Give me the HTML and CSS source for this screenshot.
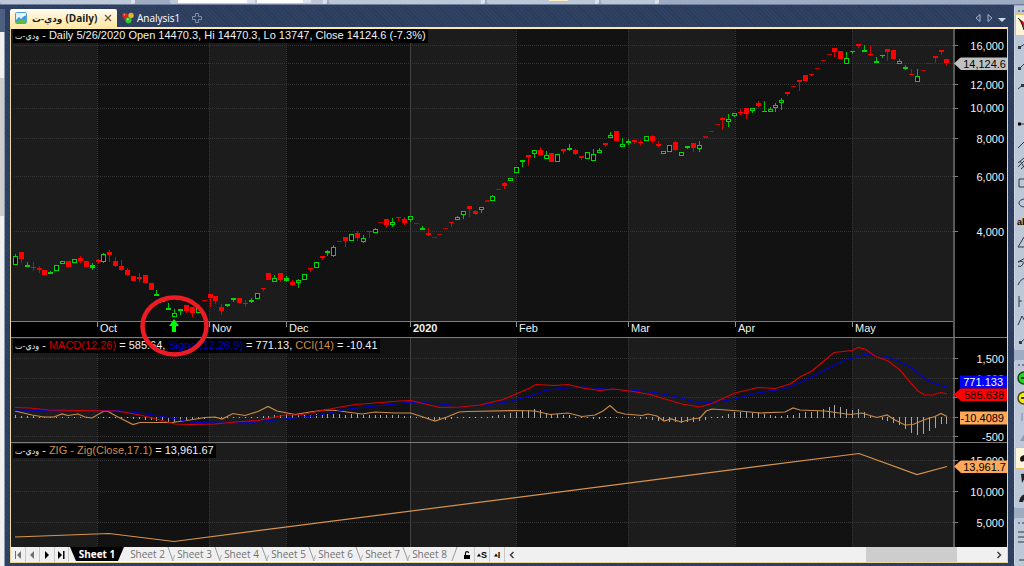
FILE: index.html
```html
<!DOCTYPE html>
<html lang="en">
<head>
<meta charset="utf-8">
<title>ودي-ت (Daily)</title>
<link rel="stylesheet" href="styles.css">
</head>
<body>
<div class="app">
  <header class="toolstrip">
    <div class="strip strip-a"></div>
    <div class="strip strip-b"><span class="field"></span><span class="field field-small"></span></div>
    <div class="strip strip-c"></div>
    <div class="strip strip-d"><span class="pressed"></span></div>
    <div class="strip strip-e"></div>
  </header>
  <div class="body">
    <aside class="side"><div class="side-head"></div><div class="side-track"><div class="side-thumb"></div></div></aside>
    <main class="workspace">
      <nav class="tabs">
        <button class="tab tab-active">
          <svg class="icon12" viewBox="0 0 12 12"><rect x=".5" y=".5" width="11" height="11" rx="1" fill="#dff0fb" stroke="#4f9fd4"/><path d="M1 8l3-3 2 2 4-4 1 1v7H1z" fill="#3c9be0"/><path d="M1 10q5-4 10-2v3H1z" fill="#5fb84a"/><circle cx="8.500" cy="3" r="1.300" fill="#fff"/></svg>
          <span class="tab-sym" dir="rtl">ودي-ت</span><span>(Daily)</span>
          <svg class="icon8" viewBox="0 0 8 8"><path d="M1 1l6 6M7 1L1 7" stroke="#66583a" stroke-width="1.300"/></svg>
        </button>
        <button class="tab">
          <svg class="icon12" viewBox="0 0 12 12"><circle cx="3" cy="3.500" r="2.700" fill="#e8201c"/><circle cx="9" cy="3.500" r="2.700" fill="#f0b020"/><path d="M1 5l5 1 1 5z" fill="#e8201c"/><circle cx="6.500" cy="8.300" r="3.100" fill="#35c02c"/><circle cx="2.400" cy="2.700" r=".8" fill="#ff9d90"/><circle cx="5.800" cy="7.300" r=".9" fill="#b0ff9a"/></svg>
          <span>Analysis1</span>
        </button>
        <button class="tab tab-new" aria-label="New tab">
          <svg class="icon12" viewBox="0 0 12 12"><path d="M4.500 1.500h3v3h3v3h-3v3h-3v-3h-3v-3h3z" fill="none" stroke="#7f8da6"/></svg>
        </button>
        <div class="tab-nav">
          <button aria-label="Previous"><svg class="icon8" viewBox="0 0 8 8"><path d="M6 .5v7L2 4z" fill="none" stroke="#aab6c9"/></svg></button>
          <button aria-label="Next"><svg class="icon8" viewBox="0 0 8 8"><path d="M2 .5v7L6 4z" fill="none" stroke="#aab6c9"/></svg></button>
          <button aria-label="List"><svg class="icon8" viewBox="0 0 8 8"><path d="M0 4h8L4 8z" fill="#ccd5e3"/></svg></button>
        </div>
      </nav>
      <section class="frame">
        <div class="charts">
          <div class="plot"><svg id="price" viewBox="11 29 942 292" preserveAspectRatio="none"></svg>
            <p class="legend"><bdi class="sym">ودي-ت</bdi> - Daily 5/26/2020 Open 14470.3, Hi 14470.3, Lo 13747, Close 14124.6 (-7.3%)</p></div>
          <div class="axis" id="price-axis"></div>
          <div class="timeline" id="timeline"></div>
          <div class="axis"></div>
          <div class="plot split"><svg id="macd" viewBox="11 338 942 104" preserveAspectRatio="none"></svg>
            <p class="legend"><bdi class="sym">ودي-ت</bdi> - <span class="c-red">MACD(12,26)</span> = 585.64, <span class="c-blue">Signal(12,26,9)</span> = 771.13, <span class="c-orange">CCI(14)</span> = -10.41</p></div>
          <div class="axis split" id="macd-axis"></div>
          <div class="plot split"><svg id="zig" viewBox="11 443 942 104" preserveAspectRatio="none"></svg>
            <p class="legend"><bdi class="sym">ودي-ت</bdi> - <span class="c-orange">ZIG - Zig(Close,17.1)</span> = 13,961.67</p></div>
          <div class="axis split" id="zig-axis"></div>
          <svg class="marks" viewBox="11 29 996 518" preserveAspectRatio="none"><path d="M174 319l5 7h-3v6h-4v-6h-3z" fill="#00ff00"/><ellipse cx="174.500" cy="326" rx="32" ry="28.500" fill="none" stroke="#ed1c24" stroke-width="4.500"/></svg>
        </div>
        <footer class="sheets">
          <div class="steps">
            <button aria-label="First sheet"><svg class="icon8" viewBox="0 0 8 8"><path d="M1 0h1v8H1zM7 0v8L3 4z" fill="#707070"/></svg></button>
            <button aria-label="Previous sheet"><svg class="icon8" viewBox="0 0 8 8"><path d="M6 0v8L2 4z" fill="#707070"/></svg></button>
            <button aria-label="Next sheet"><svg class="icon8" viewBox="0 0 8 8"><path d="M2 0v8l4-4z"/></svg></button>
            <button aria-label="Last sheet"><svg class="icon8" viewBox="0 0 8 8"><path d="M6 0h1.500v8H6zM1 0v8l4-4z"/></svg></button>
          </div>
          <div class="sheet-tabs" id="sheet-tabs"></div>
          <div class="modes">
            <button aria-label="Lock"><svg class="icon8" viewBox="0 0 8 8"><path d="M1 4h6v4H1z"/><path d="M2.500 4V2q0-1.300 1.500-1.300T5.600 2" fill="none" stroke="#000" stroke-width="1.200"/></svg></button>
            <button><svg class="icon4" viewBox="0 0 4 4"><path d="M0 3.500L2 .5l2 3z"/></svg>S</button>
            <button><svg class="icon4" viewBox="0 0 4 4"><path d="M0 3.500L2 .5l2 3z"/></svg>I</button>
          </div>
          <div class="scroll">
            <button aria-label="Scroll left"><svg class="icon8" viewBox="0 0 8 8"><path d="M5.500 1l-3 3 3 3" fill="none" stroke="#404040" stroke-width="1.500"/></svg></button>
            <div class="track"><div class="thumb"></div></div>
            <button aria-label="Scroll right"><svg class="icon8" viewBox="0 0 8 8"><path d="M2.500 1l3 3-3 3" fill="none" stroke="#404040" stroke-width="1.500"/></svg></button>
          </div>
        </footer>
      </section>
    </main>
    <aside class="tools" id="tools"></aside>
  </div>
</div>
<script src="chart.js"></script>
</body>
</html>
```
FILE: styles.css
```css
* { box-sizing: border-box; }
body { margin: 0; background: #2f4060; font-family: "Open Sans", "DejaVu Sans", sans-serif; font-size: 10px; color: #000; }
button { border: 0; background: none; padding: 0; margin: 0; font: inherit; color: inherit; display: flex; align-items: center; justify-content: center; }
svg { display: block; }
.icon12 { width: 12px; height: 12px; flex: none; }
.icon8 { width: 8px; height: 8px; flex: none; }
.icon4 { width: 4px; height: 4px; flex: none; }

.app { height: 100vh; display: flex; flex-direction: column; overflow: hidden; }
.toolstrip { flex: none; height: 5px; display: flex; gap: 2px; background: #9dabc3; border-bottom: 1px solid #6f7f9c; }
.strip { background: #bcc7d8; border-right: 4px solid #dde3ec; border-radius: 0 0 2px 2px; height: 4px; }
.strip-a { width: 135px; margin-right: 33px; }
.strip-b { width: 157px; display: flex; gap: 2px; padding: 0 12px 1px 8px; }
.field { flex: 3; background: #fff; border-right: 8px solid #dde3ec; }
.field-small { flex: 2; }
.strip-c { width: 156px; }
.strip-d { width: 112px; padding-left: 62px; }
.pressed { display: block; width: 19px; height: 2px; background: #fff0c4; border-bottom: 1px solid #e5c365; }
.strip-e { width: 58px; }

.body { flex: 1; min-height: 0; display: grid; grid-template-columns: 5px minmax(0, 1fr) 10px; }
.side { display: flex; flex-direction: column; padding-top: 4px; }
.side-head { height: 23px; background: #4d6082; }
.side-track { flex: 1; background: #f0f0f0; border-right: 1px solid #8e9bb0; padding-top: 46px; }
.side-thumb { height: 138px; background: #cdcdcd; }

.workspace { display: flex; flex-direction: column; padding: 4px 6px 3px 5px; min-height: 0;
  background: repeating-linear-gradient(45deg, #2b3c5b 0 1px, #304263 1px 3px); }
.tabs { flex: none; height: 18px; display: flex; }
.tab { gap: 3px; padding: 0 5px; color: #fff; }
.tab-active { width: 107px; gap: 3px; padding: 0 5px; background: linear-gradient(#fffcf2, #fff0c8 50%, #ffe8a6); color: #1c1c1c; font-weight: 700; border-radius: 2px 2px 0 0; }
.tab-active .icon12 { margin-right: 2px; }
.tab-active .icon8 { margin-left: auto; }
.tab-sym { font-size: 9px; }
.tab-new { padding: 0 6px; }
.tab-nav { margin-left: auto; display: flex; gap: 4px; padding-right: 2px; }

.frame { flex: 1; min-height: 0; display: flex; flex-direction: column; border: 1px solid #e8d69a; border-top: 2px solid #ffe8a6; }
.charts { position: relative; flex: 1; min-height: 0; display: grid; grid-template-columns: minmax(0, 1fr) 54px; grid-template-rows: minmax(0, 292fr) 16px minmax(0, 105fr) minmax(0, 105fr); background: #000; color: #f0f0f0; font: 11px/13px "Liberation Sans", "DejaVu Sans", sans-serif; }
.plot { position: relative; min-height: 0; }
.plot svg { width: 100%; height: 100%; }
.marks { position: absolute; inset: 0; width: 100%; height: 100%; pointer-events: none; }
.split { border-top: 1px solid #7c7c7c; }
.legend { position: absolute; left: 2px; top: 0; margin: 0; padding: 0 2px; background: #000; white-space: pre; }
.split .legend { top: 1px; }
.sym { font-family: "DejaVu Sans", sans-serif; font-size: 8px; }
.c-red { color: #c80000; }
.c-blue { color: #0000c8; }
.c-orange { color: #d09048; }
.axis { position: relative; box-shadow: inset 2px 0 #585858; }
.label { position: absolute; right: 3px; transform: translateY(-50%); }
.tick { position: absolute; left: 0; width: 5px; height: 1px; background: #808080; }
.tag { position: absolute; right: 0; width: 47px; padding-right: 3px; text-align: right; transform: translateY(-50%); color: #000; }
.tag-arrow { width: 53px; padding-right: 1px; clip-path: polygon(0 50%, 7px 0, 100% 0, 100% 100%, 7px 100%); }
.tag-grey { background: #c0c0c0; }
.tag-blue { background: #0000ff; color: #fff; padding-right: 4px; }
.tag-red { background: #ff0000; padding-right: 3px; }
.tag-orange { background: #ffa858; }
.timeline { position: relative; border-top: 1px solid #7c7c7c; }
.month { position: absolute; top: 0; padding-left: 3px; height: 12px; }
.month::before { content: ""; position: absolute; left: 0; top: 0; height: 5px; border-left: 1px solid #909090; }
.month-year { font-weight: 700; }

.sheets { flex: none; height: 15px; display: flex; background: #f0f0f0; }
.steps, .modes, .scroll { display: flex; }
.steps { width: 58px; }
.steps button { flex: 1; border-right: 1px solid #c8c8c8; }
.sheet-tabs { display: flex; padding-left: 1px; border-bottom: 1px solid #fff; }
.sheet { position: relative; width: 47px; height: 14px; color: #707070; line-height: 14px; }
.sheet::before { content: ""; position: absolute; right: 0; top: 0; width: 1px; height: 14px; background: #989898; transform: skewX(20deg); }
.sheet::after { content: ""; position: absolute; right: -3px; bottom: 0; width: 1px; height: 6px; background: #b0b0b0; transform: skewX(-20deg); }
.sheet:last-child::before { right: -2px; transform: skewX(-20deg); }
.sheet:last-child::after { display: none; }
.sheet-active { width: 54px; color: #fff; font-weight: 700; background: #000; clip-path: polygon(0 0, 100% 0, calc(100% - 6px) 100%, 6px 100%); }
.sheet-active::before, .sheet-active::after { display: none; }
.modes { margin-left: 7px; font: bold 9px/14px "Liberation Sans", sans-serif; }
.modes button { width: 15px; border-right: 1px solid #c8c8c8; }
.scroll { flex: 1; padding: 0 4px 0 3px; }
.track { flex: 1; display: flex; }
.thumb { width: 19%; margin-left: auto; margin-right: 8%; background: #cdcdcd; }

.tools { display: flex; flex-direction: column; gap: 10px; padding-top: 1px; background: #9dabc3; overflow: hidden; min-height: 0; }
.toolbar { display: flex; flex-direction: column; min-height: 0; background: #bcc7d8; border-radius: 3px 0 0 3px; border-left: 1px solid #cfd7e3; }
.toolbar-1 { flex: 344; }
.toolbar-2 { flex: 148; }
.toolbar-3 { flex: 48; }
.grip { flex: none; height: 8px; padding: 4px 0 0 3px; display: flex; gap: 2px; }
.grip i { width: 2px; height: 2px; background: #6f7f9c; flex: none; }
.tool { flex: 1; min-height: 0; justify-content: flex-start; padding-left: 2px; overflow: hidden; width: 24px; font: bold 9px/12px "Liberation Sans", sans-serif; }
.tool-on { background: #fff5da; border: 1px solid #e5c365; padding-left: 1px; }
.tool svg { width: 16px; height: 16px; flex: none; }
```
FILE: chart.js
```js
const NS = 'http://www.w3.org/2000/svg';
function add(parent, name, attrs) {
  const el = document.createElementNS(NS, name);
  for (const k in attrs) el.setAttribute(k, attrs[k]);
  parent.appendChild(el);
  return el;
}
function div(parent, cls, text, style) {
  const el = document.createElement('div');
  el.className = cls;
  el.textContent = text;
  Object.assign(el.style, style);
  parent.appendChild(el);
}
const LEFT = 11, RIGHT = 953;
const xAt = i => Math.round(15 + 5.895 * i);
const months = [['Oct', 97], ['Nov', 209], ['Dec', 286], ['2020', 410], ['Feb', 516], ['Mar', 628], ['Apr', 735], ['May', 852]];

function grid(svg, top, height, rows) {
  const edges = [LEFT, ...months.map(m => m[1]), RIGHT];
  for (let i = 0; i < edges.length - 1; i++)
    add(svg, 'rect', { x: edges[i], y: top, width: edges[i + 1] - edges[i], height, fill: i % 2 ? '#121212' : '#1c1c1c', 'shape-rendering': 'crispEdges' });
  for (const y of rows)
    add(svg, 'path', { d: `M14 ${y}.5H${RIGHT}`, stroke: '#343434', 'stroke-dasharray': '1 1', 'shape-rendering': 'crispEdges' });
  for (const [name, x] of months)
    add(svg, 'path', { d: `M${x}.5 ${top}v${height}`, stroke: name === '2020' ? '#444' : '#363636', 'stroke-dasharray': name === '2020' ? 'none' : '1 1', 'shape-rendering': 'crispEdges' });
}
function line(svg, points, color) {
  add(svg, 'polyline', { points, fill: 'none', stroke: color, 'stroke-width': 1.2 });
}

/* kind (g hollow up, G solid up, r down, d dash), body top, body bottom, high, low */
const candles = `g 256 265 254 265|r 252 259 252 263|G 265 267 262 267|r 267 268 262 271|r 268 270 266 273|r 270 275|G 272 274 271 274|g 265 271|g 261 264|r 261 267|g 259 263|r 258 261 256 263|r 261 267|G 265 268 263 270|r 260 262 259 264|g 254 262 253 263|r 252 255 250 262|r 261 266 257 267|r 266 270 260 271|r 270 275 268 276|r 276 281|r 277 279 273 282|r 275 283|r 283 290|G 294 296 290 296|G 300 302|G 308 310 303 310|g 313 317 309 317|G 309 311 309 315|r 305 311 305 313|r 307 313 307 317|g 308 313|d 300 301|r 294 298 294 307|r 296 301 296 304|r 307 311 304 315|G 304 306 304 307|G 298 300 298 302|r 298 303|r 303 304 300 307|G 300 302 298 303|g 293 299|r 288 289 288 291|r 273 280|g 278 282 275 282|r 273 280 273 282|G 278 281 276 282|r 282 285 280 286|g 280 283 279 288|g 274 280|r 268 269 268 272|g 262 268|r 256 258 256 260|G 251 253 250 256|g 247 256 245 257|d 241 242|r 237 241 237 247|g 234 241|r 233 238 231 241|g 238 242 235 243|r 231 232 231 238|g 229 233 228 233|d 222 223|r 219 225 219 228|g 222 225 218 227|r 217 218 217 221|r 219 223 217 225|g 216 220 216 222|d 223 224|G 228 230 226 230|r 233 235 228 236|d 237 238|d 234 235|d 228 229|r 222 223 222 227|g 217 220 216 220|g 211 215 211 219|r 206 209 206 217|r 211 214 210 215|g 207 210 207 213|d 200 202|g 196 201 195 201|d 189 190|r 183 186 182 189|g 178 181|g 167 173|G 160 162 160 167|r 155 157 155 166|g 150 154 150 158|r 150 155 147 156|g 155 159 151 159|r 153 162|g 154 162|r 149 151 149 154|G 148 150 144 151|r 150 154 149 155|r 156 158 156 160|g 152 159|g 154 161 149 161|g 150 153 148 153|r 143 145 143 147|g 135 138 132 138|r 131 141|g 144 147 138 147|G 141 143 139 145|r 140 142 140 144|r 142 143 140 146|g 136 141|r 136 141 135 143|r 144 146 141 147|g 151 154|g 145 152|r 142 150 141 151|g 152 156|G 146 148 146 149|r 143 148 143 152|g 145 149 141 152|d 136 138|d 131 132|d 124 125|r 118 120 117 130|g 119 122 114 127|g 113 116 113 117|r 112 113 109 115|r 108 114 108 119|g 108 111 108 113|r 103 106 101 107|G 111 112 101 112|g 109 112 107 112|g 105 108 103 112|g 100 103 98 110|r 92 94 92 96|d 86 87|r 80 82 80 91|r 75 81|r 74 75 74 76|d 68 69|d 60 61|d 54 55|r 48 52 48 57|r 51 59|g 58 64 52 64|G 51 52 51 54|r 44 46 44 48|G 50 52 45 52|r 54 55 46 56|G 61 63 57 63|G 55 56 55 58|r 49 52 49 61|r 50 59|g 61 64 59 64|G 67 69 65 70|r 74 75 69 75|g 76 82 69 82|d 70 71|d 63 64|r 56 58 56 63|r 50 52 50 55|r 59 63 59 66`.split('|').map(s => s.split(' '));

const price = document.getElementById('price');
grid(price, 29, 292, [45, 63, 84, 108, 138, 176, 231]);
const candleLayer = add(price, 'g', { 'shape-rendering': 'crispEdges' });
candles.forEach(([kind, t, b, hi, lo], i) => {
  const x = xAt(i);
  const color = kind === 'r' ? '#ff0000' : kind === 'd' ? '#c40000' : '#00d800';
  if (hi) add(candleLayer, 'rect', { x, y: hi, width: 1, height: lo - hi, fill: kind === 'r' ? '#d80000' : '#00c000' });
  if (kind === 'g') add(candleLayer, 'rect', { x: x - 1.5, y: +t + .5, width: 4, height: b - t - 1, fill: '#000', stroke: color });
  else add(candleLayer, 'rect', { x: x - 2, y: t, width: 5, height: b - t, fill: color });
});

const macdPts = '15,407.5 30,408 48,410 80,410.5 117,411 140,415 160,420 175,424 190,424.5 215,424 235,422 258,420.5 285,415 300,415 320,411 335,408 355,404.5 375,403 400,401 411,400.5 425,404 440,407.5 460,407 480,405 490,402.5 503,399.5 516,394 530,388 536,384.5 555,385.5 568,384.5 583,388 600,390.5 613,389 630,391 650,394.5 665,399 682,404 700,407 712,403.5 735,393 758,387.5 775,388.5 790,384 800,377 812,371 825,360 834,352.5 852,350.5 858,347.5 865,349 875,356 888,361 900,370 910,382 918,391 925,395 933,395 941,392.5 947,394';
const signalPts = '15,410 50,410.5 117,410.5 140,413 160,416 176,419 190,422 215,423 250,422.5 275,420 300,417.5 320,415 345,409.5 365,407 400,403.5 411,402 435,403.5 460,406 485,405 510,401.5 530,396 545,390.5 565,388 585,387 605,389 630,390 655,392.5 675,396.5 700,403 715,402.5 735,399 755,393.5 785,388.5 805,380.5 825,370 845,360 865,354.5 885,356 900,362 912,368 925,379 937,384.5 947,387';
const cciPts = '15,411 32,415 44,417 54,417 62,414 68,415.5 78,414 85,417 92,418 104,411 108,411.5 118,417 133,424.5 140,422.5 172,422.5 190,420 205,417.5 215,417 222,419 233,413.5 245,415.5 258,411.5 268,406.5 277,411 295,414.5 310,412 325,410 337,410.5 347,412 362,414 375,412 395,413 411,413 420,416 435,421 447,417 459,412 468,411.5 516,410.5 535,411 550,414.5 568,413 582,416.5 595,415 603,411 610,405.5 617,412 625,414 642,415.5 648,414 657,416 664,421 671,419 681,422 692,419 700,418 706,411 712,409 740,411 760,413 785,412 793,408 800,410 825,411 850,414.5 862,413 870,415.5 877,417.5 887,415 895,420 905,425 913,424.5 925,419.5 935,416.5 941,413.5 947,416.5';
const parse = s => s.split(' ').map(p => p.split(',').map(Number));
function valueAt(pts, x) {
  for (let i = 1; i < pts.length; i++)
    if (x <= pts[i][0]) {
      const [x0, y0] = pts[i - 1], [x1, y1] = pts[i];
      return y0 + (y1 - y0) * (x - x0) / (x1 - x0);
    }
  return pts[pts.length - 1][1];
}
const macd = document.getElementById('macd');
grid(macd, 338, 104, [358, 378, 397, 417, 436]);
const m = parse(macdPts), s = parse(signalPts);
for (let i = 0; i < candles.length; i++) {
  const x = xAt(i), h = valueAt(s, x) - valueAt(m, x);
  const size = Math.max(1, Math.round(Math.abs(h)));
  add(macd, 'rect', { x, y: h > 0 ? 418 - size : 417, width: 1, height: size, fill: '#a8a8a8', 'shape-rendering': 'crispEdges' });
}
line(macd, cciPts, '#c88a48');
line(macd, signalPts, '#0000d8');
line(macd, macdPts, '#d80000');

const zig = document.getElementById('zig');
grid(zig, 443, 104, [460, 491, 522]);
line(zig, '15,537 109,533.5 174,541.5 859,453.5 917,474.5 947,466.5', '#d8944c');

function axis(id, top, height, rows, tags) {
  const el = document.getElementById(id);
  const pct = y => (y - top) / height * 100 + '%';
  for (const [y, text] of rows) {
    div(el, 'tick', '', { top: pct(y) });
    if (text) div(el, 'label', text, { top: pct(y + .5) });
  }
  for (const [y, text, cls] of tags) div(el, 'tag ' + cls, text, { top: pct(y) });
}
axis('price-axis', 29, 292, [[45, '16,000'], [84, '12,000'], [108, '10,000'], [138, '8,000'], [176, '6,000'], [231, '4,000']], [[63.5, '14,124.6', 'tag-arrow tag-grey']]);
axis('macd-axis', 338, 104, [[358, '1,500'], [378, '1,000'], [397, ''], [417, ''], [436, '-500']], [[381.5, '771.133', 'tag-blue'], [394.5, '585.638', 'tag-arrow tag-red'], [417.5, '-10.4089', 'tag-orange']]);
axis('zig-axis', 443, 104, [[460, '15,000'], [491, '10,000'], [522, '5,000']], [[466.5, '13,961.7', 'tag-arrow tag-orange']]);

const timeline = document.getElementById('timeline');
for (const [name, x] of months)
  div(timeline, 'month' + (name === '2020' ? ' month-year' : ''), name, { left: (x - LEFT) / (RIGHT - LEFT) * 100 + '%' });

const sheetTabs = document.getElementById('sheet-tabs');
for (let i = 1; i <= 8; i++) {
  const b = document.createElement('button');
  b.className = 'sheet' + (i === 1 ? ' sheet-active' : '');
  b.textContent = 'Sheet ' + i;
  sheetTabs.appendChild(b);
}

/* drawing tools: path markup in a 16px box, "" leaves an empty slot, a leading "!" marks the tool in use */
const k = 'fill="none" stroke="#303840"';
const toolbars = [
  ['!<path d="M1 1l7 12 2-6z" fill="#e01818"/><path d="M1 1l3 3 3 9" stroke="#111" fill="none"/>',
    `<path d="M3 10L11 5" ${k}/><path d="M1 9h3v3H1z" fill="#303840"/>`, `<path d="M3 11L11 3" ${k}/><path d="M1 10h3v3H1z" fill="#303840"/>`, `<path d="M1 12L12 3" ${k}/><path d="M4 7h3v3H4z" fill="#303840"/>`, '',
    `<path d="M1 8h12" ${k}/><path d="M1 6.500h3v3H1z"/>`, `<path d="M1 12L11 2" ${k}/>`, `<path d="M1 12L11 2M1 8l6-5M4 14l8-7M3 6l4 6" ${k}/>`,
    `<path d="M2 4h11v8H2z" ${k}/>`, `<ellipse cx="8" cy="8" rx="6" ry="4" ${k}/>`, 'abc', `<path d="M1 13h12L7 3z" ${k}/>`,
    `<path d="M1 12q3 2 5-2T1 8l9-5" ${k}/>`, `<path d="M1 12q3-8 11-7" ${k}/>`, `<path d="M2 3v11M2 8h3m2 0h3" ${k}/>`, `<path d="M1 13L5 4l4 7 4-8" ${k}/>`, `<path d="M4 10L11 4" ${k}/><path d="M2 9h3v3H2z" fill="#303840"/>`],
  ['<circle cx="7" cy="8" r="6" fill="#20d820" stroke="#184818" stroke-width="1.500"/><path d="M4 8h8" stroke="#063806" stroke-width="2"/>',
    '<circle cx="7" cy="8" r="6" fill="#f0e810" stroke="#484810" stroke-width="1.500"/><path d="M4 8h8" stroke="#383806" stroke-width="2"/>',
    '<path d="M5 4v8M8 4v8" stroke="#7c8798"/>', '<path d="M3 12L8 4v8z" fill="#8b97aa"/>',
    '!<path d="M3 9q0-3 4-4v6q-4 2-4-2" fill="#111"/>', '<path d="M4 4q5-1 5 2L5 13z" fill="#202020"/>', '<path d="M2 12q1-7 7-8L6 12z" fill="#202020"/>'],
  ['<path d="M1 4h12M1 9h12M1 14h12" stroke="#303840"/>', '<path d="M2 12h10" stroke="#303840"/>']
];
const tools = document.getElementById('tools');
toolbars.forEach((items, n) => {
  const bar = document.createElement('div');
  bar.className = 'toolbar toolbar-' + (n + 1);
  bar.innerHTML = '<div class="grip"><i></i><i></i></div>' + items.map(t => {
    const on = t[0] === '!';
    const art = on ? t.slice(1) : t;
    if (!art) return '<div class="tool"></div>';
    return `<button class="tool${on ? ' tool-on' : ''}">${art[0] === '<' ? `<svg viewBox="0 0 16 16">${art}</svg>` : art}</button>`;
  }).join('');
  tools.appendChild(bar);
});
```
